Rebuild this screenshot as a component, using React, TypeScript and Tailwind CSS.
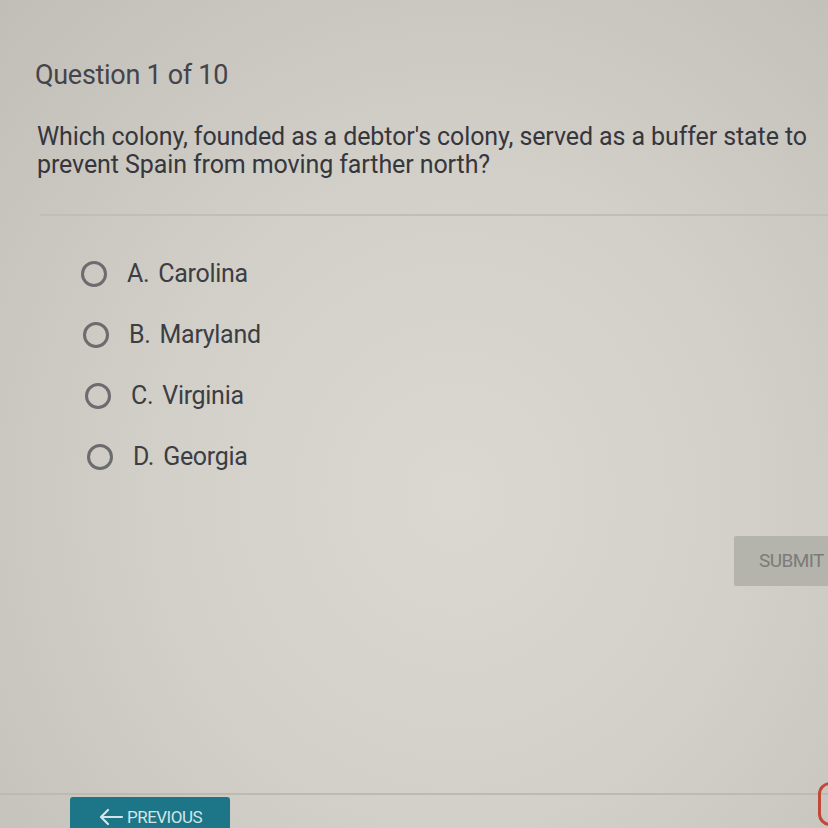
import React from "react";

const options = [
  { letter: "A.", label: "Carolina" },
  { letter: "B.", label: "Maryland" },
  { letter: "C.", label: "Virginia" },
  { letter: "D.", label: "Georgia" },
];

const font = { fontFamily: "Roboto, 'Liberation Sans', sans-serif" };

export default function App() {
  return (
    <div
      className="relative w-[828px] h-[828px] overflow-hidden bg-[radial-gradient(ellipse_at_55%_60%,#dad8d1_0%,#d2d0c9_45%,#c1beb8_100%)] text-[#3b3b40]"
      style={font}
    >
      <div className="flex flex-col pl-[35px]">
        <h1 className="mt-[58px] text-[27px] leading-[34px] tracking-[-0.3px] text-[#44444a]">
          Question 1 of 10
        </h1>
        <p className="mt-[31px] pl-[2px] pr-[10px] text-[25px] leading-[28px] tracking-[-0.1px] text-[#36363d]">
          Which colony, founded as a debtor's colony, served as a buffer state to
          prevent Spain from moving farther north?
        </p>
        <div className="mt-[35px] ml-[5px] h-[2px] bg-[#c0beb7]" />

        <div className="mt-[40px] flex flex-col gap-[26px] pl-[46px]">
          {options.map((o, i) => (
            <label
              key={o.letter}
              className="flex items-center gap-[20px] h-[35px]"
              style={{ marginLeft: i * 2 }}
            >
              <span className="w-[26px] h-[26px] rounded-full border-[3px] border-[#6c6c6f]" />
              <span className="text-[25px] tracking-[-0.3px] text-[#3d3d44]">
                <span className="mr-[9px]">{o.letter}</span>
                {o.label}
              </span>
            </label>
          ))}
        </div>
      </div>

      <div className="flex justify-end mt-[62px]">
        <button className="w-[94px] h-[50px] bg-[#b4b3ac] pl-[25px] text-left text-[19px] tracking-[-0.6px] text-[#7b7b7a] rounded-l-[2px] whitespace-nowrap overflow-hidden">
          SUBMIT
        </button>
      </div>

      <div className="absolute left-0 right-0 top-[793px] h-[2px] bg-[#bcbab3]" />
      <button className="absolute left-[70px] top-[797px] w-[160px] h-[31px] rounded-t-[3px] bg-[#1d7688] flex items-start justify-center gap-[3px] pt-[10px] text-[17px] leading-[20px] tracking-[-0.5px] text-[#d3e5e8]">
        <svg width="26" height="18" viewBox="0 0 26 18" className="mt-[1px]" fill="none" stroke="currentColor" strokeWidth="2.2" strokeLinecap="round" strokeLinejoin="round">
          <path d="M24 9H3M10 2L3 9l7 7" />
        </svg>
        PREVIOUS
      </button>
      <div className="absolute left-[818px] top-[782px] w-[24px] h-[44px] rounded-full border-[3px] border-[#c04a3a]" />
    </div>
  );
}
